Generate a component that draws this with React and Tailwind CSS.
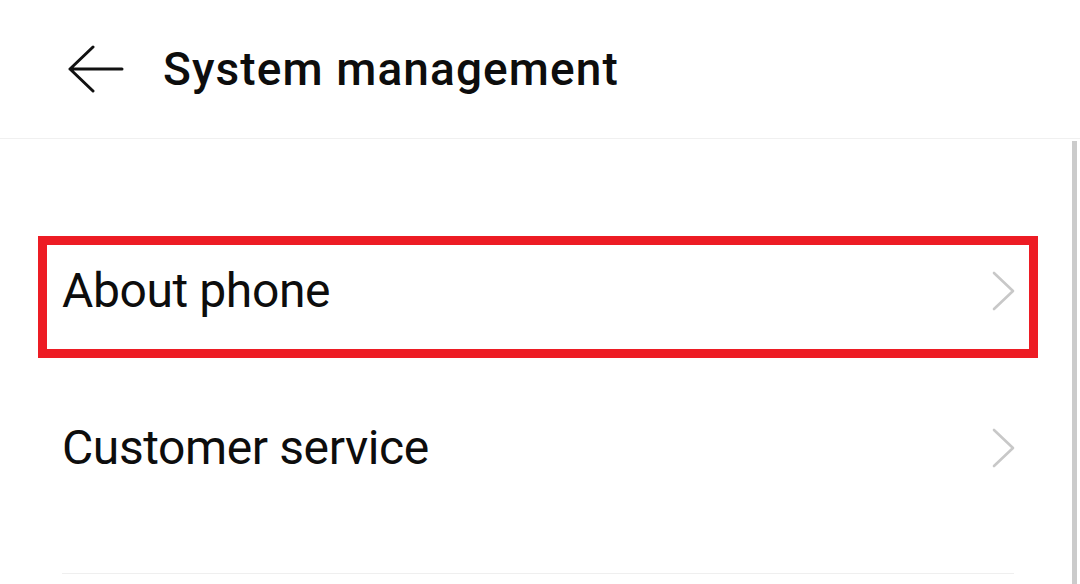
import React from "react";

const Chevron = () => (
  <svg width="23" height="40" viewBox="0 0 23 40" fill="none">
    <path d="M2 2 L21 20 L2 38" stroke="#c8c8c8" strokeWidth="2.6" strokeLinecap="round" strokeLinejoin="round" />
  </svg>
);

const App = () => {
  return (
    <div className="relative w-[1080px] h-[584px] bg-white overflow-hidden font-['Roboto',sans-serif] text-[#0d0d0d]">
      {/* Top bar */}
      <div className="flex items-center h-[139px] border-b border-[#f0f0f0]">
        <svg className="ml-[68px]" width="56" height="50" viewBox="0 0 56 50" fill="none">
          <path d="M2 25 H54 M2 25 L25 3 M2 25 L25 47" stroke="#111" strokeWidth="3" strokeLinecap="round" strokeLinejoin="round" />
        </svg>
        <h1 className="ml-[39px] text-[46px] leading-none font-medium tracking-[1.1px]">System management</h1>
      </div>

      {/* Settings list */}
      <div className="ml-[38px] w-[1000px] mt-[97px]">
        <div className="flex items-center justify-between h-[122px] border-[9px] border-[#ed1c24] pl-[15px] pr-[14px] pb-[12px]">
          <span className="text-[48px] leading-none tracking-[-0.4px]">About phone</span>
          <Chevron />
        </div>

        <div className="flex items-center justify-between h-[180px] pl-[24px] pr-[23px]">
          <span className="text-[48px] leading-none tracking-[-0.4px]">Customer service</span>
          <Chevron />
        </div>

        <div className="mt-[35px] mx-[24px] h-px bg-[#efefef]"></div>
      </div>

      {/* scrollbar */}
      <div className="absolute right-[3px] top-[141px] bottom-0 w-[5px] bg-[#cbcbcb]"></div>
    </div>
  );
};

export default App;
